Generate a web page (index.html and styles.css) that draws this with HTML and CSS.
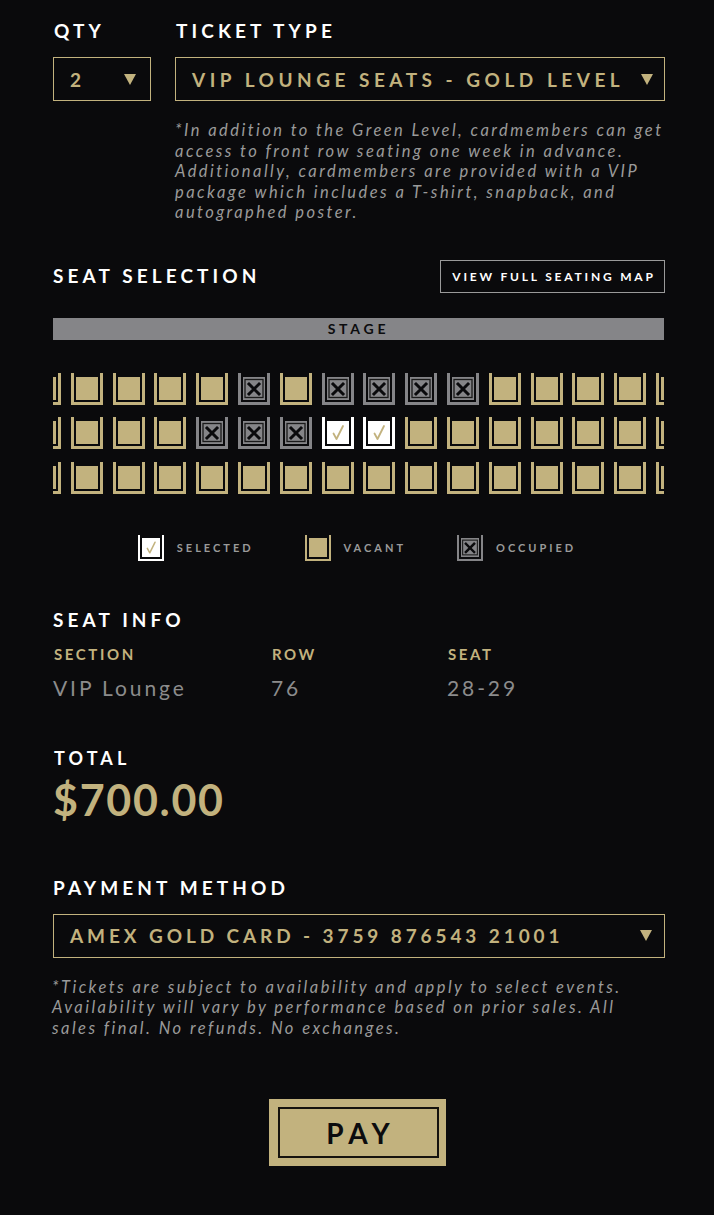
FILE: index.html
```html
<!DOCTYPE html>
<html lang="en">
<head>
<meta charset="utf-8">
<title>Ticket Checkout</title>
<link rel="stylesheet" href="styles.css">
</head>
<body>
<main class="page">
  <div class="ticket-row">
    <div class="field field-qty">
      <div class="label">QTY</div>
      <div class="select select-qty"><span>2</span><i class="caret"></i></div>
    </div>
    <div class="field field-type">
      <div class="label">TICKET TYPE</div>
      <div class="select select-type"><span>VIP LOUNGE SEATS - GOLD LEVEL</span><i class="caret"></i></div>
      <p class="note">*In addition to the Green Level, cardmembers can get<br>access to front row seating one week in advance.<br>Additionally, cardmembers are provided with a VIP<br>package which includes a T-shirt, snapback, and<br>autographed poster.</p>
    </div>
  </div>

  <section class="seat-selection">
    <div class="section-head">
      <div class="label">SEAT SELECTION</div>
      <button class="map-btn">VIEW FULL SEATING MAP</button>
    </div>
    <div class="stage">STAGE</div>
    <div class="seatmap">
      <div class="seat-row">
        <span class="seat"></span><span class="seat"></span><span class="seat"></span><span class="seat"></span><span class="seat"></span>
        <span class="seat occ"><svg viewBox="0 0 22 23"><rect x="2" y="2.5" width="18" height="18" fill="none" stroke="#1a1a1a" stroke-width="1.3"/><path d="M6 7 L16 17 M16 7 L6 17" stroke="#0a0a0c" stroke-width="3" stroke-linecap="square"/></svg></span>
        <span class="seat"></span>
        <span class="seat occ"><svg viewBox="0 0 22 23"><rect x="2" y="2.5" width="18" height="18" fill="none" stroke="#1a1a1a" stroke-width="1.3"/><path d="M6 7 L16 17 M16 7 L6 17" stroke="#0a0a0c" stroke-width="3" stroke-linecap="square"/></svg></span>
        <span class="seat occ"><svg viewBox="0 0 22 23"><rect x="2" y="2.5" width="18" height="18" fill="none" stroke="#1a1a1a" stroke-width="1.3"/><path d="M6 7 L16 17 M16 7 L6 17" stroke="#0a0a0c" stroke-width="3" stroke-linecap="square"/></svg></span>
        <span class="seat occ"><svg viewBox="0 0 22 23"><rect x="2" y="2.5" width="18" height="18" fill="none" stroke="#1a1a1a" stroke-width="1.3"/><path d="M6 7 L16 17 M16 7 L6 17" stroke="#0a0a0c" stroke-width="3" stroke-linecap="square"/></svg></span>
        <span class="seat occ"><svg viewBox="0 0 22 23"><rect x="2" y="2.5" width="18" height="18" fill="none" stroke="#1a1a1a" stroke-width="1.3"/><path d="M6 7 L16 17 M16 7 L6 17" stroke="#0a0a0c" stroke-width="3" stroke-linecap="square"/></svg></span>
        <span class="seat"></span><span class="seat"></span><span class="seat"></span><span class="seat"></span><span class="seat"></span>
      </div>
      <div class="seat-row">
        <span class="seat"></span><span class="seat"></span><span class="seat"></span><span class="seat"></span>
        <span class="seat occ"><svg viewBox="0 0 22 23"><rect x="2" y="2.5" width="18" height="18" fill="none" stroke="#1a1a1a" stroke-width="1.3"/><path d="M6 7 L16 17 M16 7 L6 17" stroke="#0a0a0c" stroke-width="3" stroke-linecap="square"/></svg></span>
        <span class="seat occ"><svg viewBox="0 0 22 23"><rect x="2" y="2.5" width="18" height="18" fill="none" stroke="#1a1a1a" stroke-width="1.3"/><path d="M6 7 L16 17 M16 7 L6 17" stroke="#0a0a0c" stroke-width="3" stroke-linecap="square"/></svg></span>
        <span class="seat occ"><svg viewBox="0 0 22 23"><rect x="2" y="2.5" width="18" height="18" fill="none" stroke="#1a1a1a" stroke-width="1.3"/><path d="M6 7 L16 17 M16 7 L6 17" stroke="#0a0a0c" stroke-width="3" stroke-linecap="square"/></svg></span>
        <span class="seat sel"><svg viewBox="0 0 22 23"><path d="M6.5 12.5 L9.5 18 L16 5" fill="none" stroke="#c2b27e" stroke-width="1.8" stroke-linecap="round" stroke-linejoin="round"/></svg></span>
        <span class="seat sel"><svg viewBox="0 0 22 23"><path d="M6.5 12.5 L9.5 18 L16 5" fill="none" stroke="#c2b27e" stroke-width="1.8" stroke-linecap="round" stroke-linejoin="round"/></svg></span>
        <span class="seat"></span><span class="seat"></span><span class="seat"></span><span class="seat"></span><span class="seat"></span><span class="seat"></span><span class="seat"></span>
      </div>
      <div class="seat-row">
        <span class="seat"></span><span class="seat"></span><span class="seat"></span><span class="seat"></span><span class="seat"></span><span class="seat"></span><span class="seat"></span><span class="seat"></span>
        <span class="seat"></span><span class="seat"></span><span class="seat"></span><span class="seat"></span><span class="seat"></span><span class="seat"></span><span class="seat"></span><span class="seat"></span>
      </div>
    </div>
    <div class="legend">
      <div class="legend-item"><span class="seat sm sel"><svg viewBox="0 0 22 23"><path d="M6.5 12.5 L9.5 18 L16 5" fill="none" stroke="#c2b27e" stroke-width="1.8" stroke-linecap="round" stroke-linejoin="round"/></svg></span><span class="legend-text">SELECTED</span></div>
      <div class="legend-item"><span class="seat sm"></span><span class="legend-text">VACANT</span></div>
      <div class="legend-item"><span class="seat sm occ"><svg viewBox="0 0 22 23"><rect x="2" y="2.5" width="18" height="18" fill="none" stroke="#1a1a1a" stroke-width="1.3"/><path d="M6 7 L16 17 M16 7 L6 17" stroke="#0a0a0c" stroke-width="3" stroke-linecap="square"/></svg></span><span class="legend-text">OCCUPIED</span></div>
    </div>
  </section>

  <section class="seat-info">
    <div class="label">SEAT INFO</div>
    <div class="info-grid">
      <div class="info-col"><div class="info-key">SECTION</div><div class="info-val">VIP Lounge</div></div>
      <div class="info-col"><div class="info-key">ROW</div><div class="info-val">76</div></div>
      <div class="info-col"><div class="info-key">SEAT</div><div class="info-val">28-29</div></div>
    </div>
  </section>

  <section class="total">
    <div class="label label-sm">TOTAL</div>
    <div class="amount">$700.00</div>
  </section>

  <section class="payment">
    <div class="label">PAYMENT METHOD</div>
    <div class="select select-pay"><span>AMEX GOLD CARD - 3759 876543 21001</span><i class="caret"></i></div>
    <p class="note note-pay">*Tickets are subject to availability and apply to select events.<br>Availability will vary by performance based on prior sales. All<br>sales final. No refunds. No exchanges.</p>
  </section>

  <div class="pay-wrap">
    <button class="pay"><span>PAY</span></button>
  </div>
</main>
</body>
</html>
```

FILE: styles.css
```css
* { box-sizing: border-box; }

body {
  margin: 0;
  background: #0a0a0c;
  color: #ffffff;
  font-family: Lato, "Noto Sans", sans-serif;
}

.page {
  width: 665px;
  padding: 19px 0 40px 53px;
}

.label {
  font-size: 19px;
  line-height: 24px;
  font-weight: 700;
  letter-spacing: 4.1px;
  color: #ffffff;
}

/* ticket row */
.ticket-row {
  display: flex;
  gap: 24px;
}
.field-qty { width: 98px; flex: none; }
.field-type { flex: 1; min-width: 0; }
.field .label { margin-bottom: 14px; padding-left: 1px; }

.select {
  height: 44px;
  border: 1px solid #c2b27e;
  display: flex;
  align-items: center;
  justify-content: space-between;
  padding: 0 11px 0 16px;
  color: #c2b27e;
  font-size: 19px;
  font-weight: 700;
  letter-spacing: 4.5px;
  white-space: nowrap;
}
.select-qty { padding-right: 14px; }
.caret {
  flex: none;
  width: 0;
  height: 0;
  border-left: 6.5px solid transparent;
  border-right: 6.5px solid transparent;
  border-top: 11px solid #c2b27e;
}

.note {
  margin: 19px 0 0;
  font-size: 16.5px;
  line-height: 20.5px;
  font-style: italic;
  letter-spacing: 2.45px;
  color: #9a9a9a;
  white-space: nowrap;
}

/* seat selection */
.seat-selection { margin-top: 37px; }
.section-head {
  display: flex;
  align-items: center;
  justify-content: space-between;
}
.map-btn {
  width: 225px;
  height: 33px;
  background: transparent;
  border: 1px solid #9a9a9a;
  color: #ffffff;
  font-family: inherit;
  font-size: 12px;
  font-weight: 700;
  letter-spacing: 2.8px;
  padding: 0 0 0 3px;
}
.stage {
  margin-top: 25px;
  width: 611px;
  height: 22px;
  background: #858588;
  color: #0c0c0e;
  font-size: 14px;
  font-weight: 700;
  letter-spacing: 3.8px;
  line-height: 22px;
  text-align: center;
}

.seatmap {
  margin-top: 33px;
  width: 611px;
  overflow: hidden;
  display: flex;
  flex-direction: column;
  gap: 12.5px;
}
.seat-row {
  display: flex;
  justify-content: center;
  gap: 9.8px;
}

.seat {
  flex: none;
  width: 32px;
  height: 32px;
  color: #c2b27e;
  border: 3px solid currentColor;
  border-top: 0;
  padding: 4px 2px 2px 2px;
  background: currentColor;
  background-clip: content-box;
  display: flex;
  align-items: center;
  justify-content: center;
}
.seat svg { width: 100%; height: 100%; display: block; }
.seat.occ { color: #858588; }
.seat.sel { color: #ffffff; }

.seat.sm {
  width: 26px;
  height: 26px;
  border-width: 2.5px;
  border-top: 0;
  padding: 3px 2px 2px 2px;
}

.legend {
  margin-top: 41px;
  width: 608px;
  display: flex;
  justify-content: center;
  gap: 51px;
}
.legend-item {
  display: flex;
  align-items: center;
  gap: 13px;
}
.legend-text {
  font-size: 11px;
  font-weight: 700;
  letter-spacing: 3px;
  color: #9a9a9a;
}

/* seat info */
.seat-info { margin-top: 47px; }
.info-grid {
  margin-top: 12px;
  display: grid;
  grid-template-columns: 218px 176px auto;
}
.info-key {
  font-size: 15px;
  line-height: 20px;
  font-weight: 700;
  letter-spacing: 2.6px;
  color: #c2b27e;
  padding-left: 1px;
}
.info-val {
  margin-top: 11px;
  font-size: 21px;
  line-height: 26px;
  letter-spacing: 2.9px;
  color: #8c8c8c;
}

/* total */
.total { margin-top: 45px; }
.label-sm { font-size: 18px; padding-left: 1px; }
.amount {
  margin-top: 4px;
  font-size: 43px;
  line-height: 52px;
  font-weight: 700;
  letter-spacing: 1.7px;
  color: #c2b27e;
}

/* payment */
.payment { margin-top: 50px; }
.payment .label { margin-bottom: 14px; }
.select-pay {
  width: 612px;
  padding-right: 12px;
  letter-spacing: 3.9px;
}
.note-pay {
  margin: 19px 0 0 -1px;
}

.pay-wrap {
  margin-top: 61px;
  width: 608px;
  display: flex;
  justify-content: center;
}
.pay {
  width: 177px;
  height: 67px;
  background: #c2b27e;
  border: 0;
  padding: 8px 7px 8px 9px;
  font-family: inherit;
  cursor: pointer;
}
.pay span {
  display: flex;
  align-items: center;
  justify-content: center;
  height: 100%;
  border: 2.5px solid #16130e;
  font-size: 28px;
  font-weight: 700;
  letter-spacing: 6px;
  color: #0c0c0e;
  padding-left: 6px;
}
```
